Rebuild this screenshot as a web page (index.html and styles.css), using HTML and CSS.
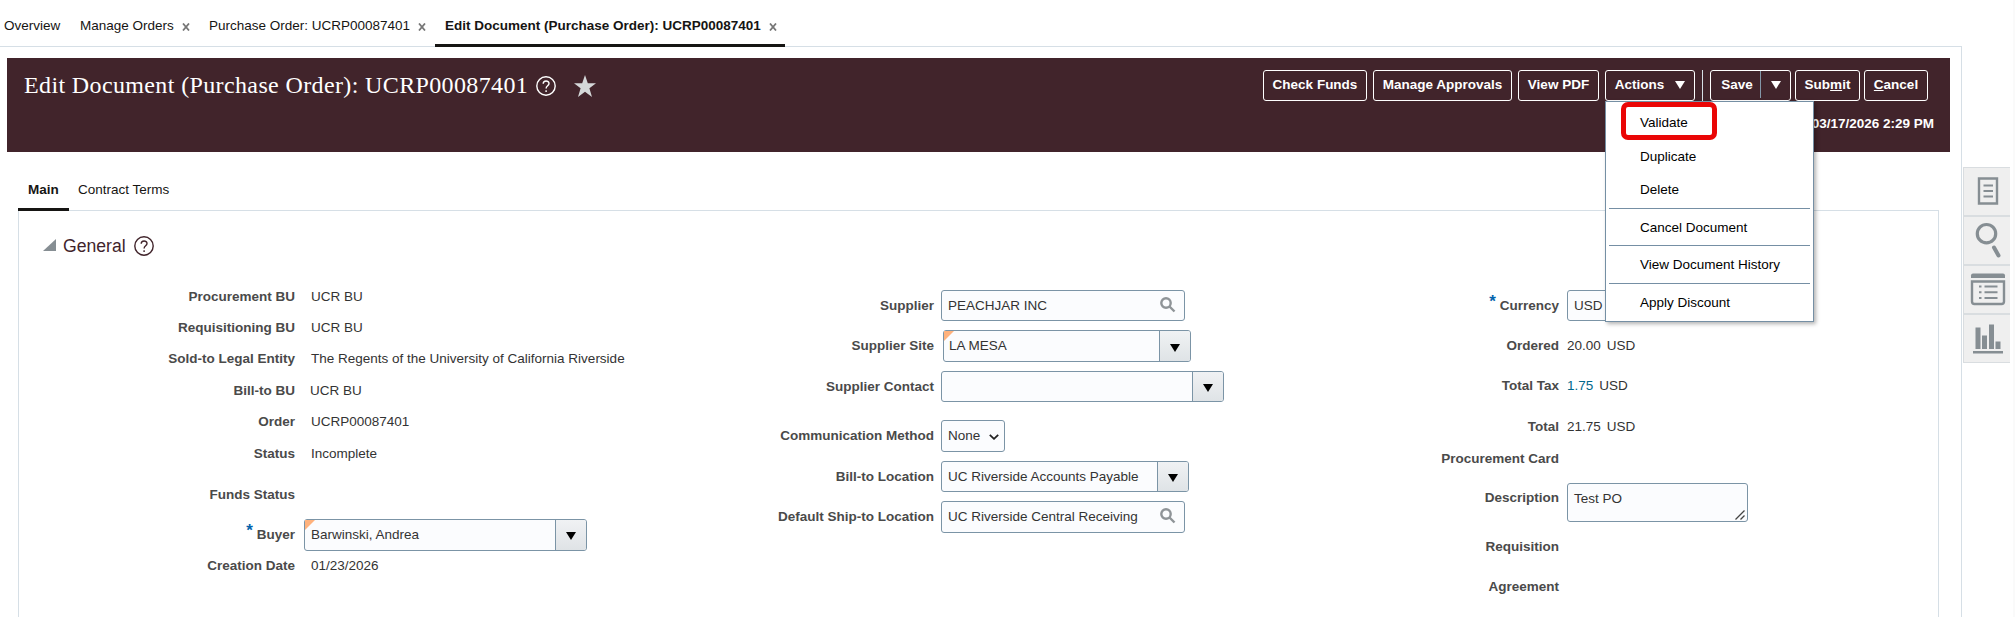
FILE: index.html
```html
<!DOCTYPE html>
<html lang="en">
<head>
  <meta charset="utf-8"/>
  <title>Edit Document (Purchase Order): UCRP00087401</title>
  <link rel="stylesheet" href="styles.css">
</head>
<body>
  <div class="page">
    <nav class="tabs">
      <a class="tab overview">Overview</a>
      <a class="tab orders">Manage Orders <svg class="close" viewBox="0 0 8 8"><path d="M1 .5l6 7M7 .5l-6 7"/></svg></a>
      <a class="tab order">Purchase Order: UCRP00087401 <svg class="close" viewBox="0 0 8 8"><path d="M1 .5l6 7M7 .5l-6 7"/></svg></a>
      <a class="tab active">Edit Document (Purchase Order): UCRP00087401 <svg class="close" viewBox="0 0 8 8"><path d="M1 .5l6 7M7 .5l-6 7"/></svg></a>
    </nav>

    <div class="content">
      <header class="header">
        <div class="title">
          <h1>Edit Document (Purchase Order): UCRP00087401</h1>
          <svg class="help" viewBox="0 0 20 20"><circle cx="10" cy="10" r="9.2"/><path d="M7.2 7.8c0-3.8 5.8-3.6 5.8-.3 0 2.2-2.9 2.3-2.9 4.9M10.1 14.2v1.7"/></svg>
          <svg class="star" viewBox="0 0 24 22"><path d="M12 0l2.8 8.2H23l-6.6 5.1L19 22l-7-5.2L5 22l2.6-8.7L1 8.2h8.2z"/></svg>
        </div>
        <div class="header-right">
          <div class="buttons">
            <button class="btn check">Check Funds</button>
            <button class="btn approvals">Manage Approvals</button>
            <button class="btn pdf">View PDF</button>
            <div class="actions">
              <button class="btn">Actions <i class="arrow"></i></button>
              <div class="menu">
                <a class="item">Validate<span class="marker"></span></a>
                <a class="item">Duplicate</a>
                <a class="item">Delete</a>
                <hr>
                <a class="item">Cancel Document</a>
                <hr>
                <a class="item">View Document History</a>
                <hr>
                <a class="item">Apply Discount</a>
              </div>
            </div>
            <span class="divider"></span>
            <button class="btn save"><span>Save</span><i class="arrow"></i></button>
            <button class="btn submit">Sub<u>m</u>it</button>
            <button class="btn cancel"><u>C</u>ancel</button>
          </div>
          <div class="saved">03/17/2026 2:29 PM</div>
        </div>
      </header>

      <nav class="subtabs">
        <a class="subtab active">Main</a>
        <a class="subtab">Contract Terms</a>
      </nav>

      <section class="panel">
        <div class="section-title">
          <svg class="collapse" viewBox="0 0 13 12"><path d="M13 0v12H0z"/></svg>
          <h2>General</h2>
          <svg class="help" viewBox="0 0 20 20"><circle cx="10" cy="10" r="9.2"/><path d="M7.2 7.8c0-3.8 5.8-3.6 5.8-.3 0 2.2-2.9 2.3-2.9 4.9M10.1 14.2v1.7"/></svg>
        </div>

        <div class="form">
          <div class="col first">
            <div class="row"><label>Procurement BU</label><span>UCR BU</span></div>
            <div class="row"><label>Requisitioning BU</label><span>UCR BU</span></div>
            <div class="row"><label>Sold-to Legal Entity</label><span>The Regents of the University of California Riverside</span></div>
            <div class="row bill"><label>Bill-to BU</label><span>UCR BU</span></div>
            <div class="row"><label>Order</label><span>UCRP00087401</span></div>
            <div class="row"><label>Status</label><span>Incomplete</span></div>
            <div class="row funds"><label>Funds Status</label></div>
            <div class="row buyer"><label><b class="req">*</b> Buyer</label>
              <div class="field combo changed"><span>Barwinski, Andrea</span><div class="drop"><i class="arrow"></i></div></div>
            </div>
            <div class="row"><label>Creation Date</label><span>01/23/2026</span></div>
          </div>

          <div class="col second">
            <div class="row"><label>Supplier</label>
              <div class="field lov"><span>PEACHJAR INC</span><svg class="search" viewBox="0 0 16 16"><circle cx="6" cy="6" r="4.7"/><path d="M9.5 9.5l5 5"/></svg></div>
            </div>
            <div class="row site"><label>Supplier Site</label>
              <div class="field combo changed"><span>LA MESA</span><div class="drop"><i class="arrow"></i></div></div>
            </div>
            <div class="row contact"><label>Supplier Contact</label>
              <div class="field combo"><span></span><div class="drop"><i class="arrow"></i></div></div>
            </div>
            <div class="row method"><label>Communication Method</label>
              <div class="field select"><span>None</span><svg class="chevron" viewBox="0 0 10 6"><path d="M.8.8L5 4.8 9.2.8"/></svg></div>
            </div>
            <div class="row location"><label>Bill-to Location</label>
              <div class="field combo"><span>UC Riverside Accounts Payable</span><div class="drop"><i class="arrow"></i></div></div>
            </div>
            <div class="row ship"><label>Default Ship-to Location</label>
              <div class="field lov"><span>UC Riverside Central Receiving</span><svg class="search" viewBox="0 0 16 16"><circle cx="6" cy="6" r="4.7"/><path d="M9.5 9.5l5 5"/></svg></div>
            </div>
          </div>

          <div class="col third">
            <div class="row currency"><label><b class="req">*</b> Currency</label><div class="field"><span>USD</span></div></div>
            <div class="row"><label>Ordered</label><span>20.00</span><span class="unit">USD</span></div>
            <div class="row tax"><label>Total Tax</label><a class="link">1.75</a><span class="unit">USD</span></div>
            <div class="row"><label>Total</label><span>21.75</span><span class="unit">USD</span></div>
            <div class="row card"><label>Procurement Card</label></div>
            <div class="row description"><label>Description</label>
              <div class="field textarea"><span>Test PO</span><svg class="grip" viewBox="0 0 10 10"><path d="M.5 9.5l9-9M5.5 9.5l4-4"/></svg></div>
            </div>
            <div class="row requisition"><label>Requisition</label></div>
            <div class="row agreement"><label>Agreement</label></div>
          </div>
        </div>
      </section>
    </div>
  </div>

  <aside class="dock">
    <div class="dock-item"><svg viewBox="0 0 48 47"><path class="line" d="M15 10.5h18v25H15z"/><path class="thin" d="M19.500 17.500h9.500M19.500 23h9.500M19.500 28.500h9.500"/></svg></div>
    <div class="dock-item"><svg viewBox="0 0 48 47"><circle class="ring" cx="22.500" cy="16.700" r="9.200"/><path class="handle" d="M30 30.500l4.500 8"/></svg></div>
    <div class="dock-item"><svg viewBox="0 0 48 47"><path class="fill" d="M7 12V9.500q0-2 2-2h30q2 0 2 2V12z"/><path class="line" d="M8 15.500h32v20q0 2.500-2.500 2.500h-27Q8 38 8 35.500z"/><path class="thin" d="M15 20.500h2.500M20.500 20.500h13M15 26.300h2.500M20.500 26.300h13M15 32h2.500M20.500 32h13"/></svg></div>
    <div class="dock-item"><svg viewBox="0 0 48 47"><path class="fill" d="M11.500 12.500h5V34h-5zM18 20.500h5V34h-5zM25 9.500h5V34h-5zM31.500 26.500h5V34h-5zM9 36h30v2.500H9z"/></svg></div>
  </aside>
</body>
</html>
```
FILE: styles.css
```css
* {
  box-sizing: border-box;
}
body {
  display: flex;
  margin: 0;
  height: 617px;
  overflow: hidden;
  background: #fff;
  color: #333;
  font-family: "Liberation Sans", Arial, sans-serif;
  font-size: 13.5px;
  line-height: 16px;
  white-space: nowrap;
}
h1, h2 {
  margin: 0;
  font-weight: normal;
}
svg {
  display: block;
  flex: none;
  fill: none;
}
.page {
  width: 1962px;
  flex: none;
}

/* top tabs */
.tabs {
  display: flex;
  height: 47px;
  border-bottom: 1px solid #d6dfe6;
}
.tab {
  display: flex;
  align-items: center;
  height: 47px;
  padding-top: 5px;
  color: #161513;
}
.tab.overview { width: 76px; padding-left: 4px; }
.tab.orders { width: 120px; padding-left: 4px; }
.tab.order { width: 239px; padding-left: 13px; }
.tab.active {
  width: 350px;
  padding-left: 10px;
  padding-top: 8px;
  border-bottom: 3px solid #161513;
  font-weight: bold;
}
.close {
  width: 8px;
  height: 8px;
  margin: 2px 0 0 8px;
  stroke: #777;
  stroke-width: 1.8;
}

.content {
  height: 570px;
  padding: 11px 11px 0 7px;
  border-right: 1px solid #d6dfe6;
}

/* page header */
.header {
  display: flex;
  justify-content: space-between;
  height: 94px;
  padding: 12px 16px 0 17px;
  background: #41242b;
  color: #fff;
}
.title {
  display: flex;
  height: 33px;
  align-items: center;
}
.title h1 {
  width: 512px;
  padding-bottom: 4px;
  font-family: Georgia, "Liberation Serif", serif;
  font-size: 24px;
  letter-spacing: 0.37px;
  line-height: 28px;
}
.help {
  width: 20px;
  height: 20px;
  stroke: currentColor;
  stroke-width: 1.4;
}
.title .help { margin-bottom: 1px; }
.star {
  width: 24px;
  height: 22px;
  margin: 0 0 1px 17px;
  fill: #d5d8d9;
}
.header-right {
  display: flex;
  flex-direction: column;
  align-items: flex-end;
}
.buttons {
  display: flex;
  margin-right: 6px;
}
.btn {
  display: flex;
  align-items: center;
  justify-content: center;
  height: 31px;
  margin: 0;
  padding: 0 0 2px;
  border: 1px solid #fff;
  border-radius: 3px;
  background: none;
  color: #fff;
  font: bold 13.5px/16px "Liberation Sans", Arial, sans-serif;
}
.btn.check { width: 104px; margin-right: 6px; }
.btn.approvals { width: 139px; margin-right: 6px; }
.btn.pdf { width: 81px; margin-right: 6px; }
.btn.submit { width: 65px; margin-right: 4px; }
.btn.cancel { width: 64px; }
.actions {
  position: relative;
}
.actions .btn { width: 90px; }
.arrow {
  width: 0;
  height: 0;
  border: 5px solid transparent;
  border-top: 8px solid currentColor;
  border-bottom: 0;
}
.actions .arrow { margin-left: 11px; }
.divider {
  width: 1px;
  height: 31px;
  margin: 0 7px 0 7px;
  background: #d6dfe6;
}
.btn.save {
  width: 81px;
  margin-right: 4px;
  padding: 0;
  justify-content: flex-start;
}
.save span {
  width: 50px;
  height: 27px;
  margin-bottom: 2px;
  padding: 6px 0 0 3px;
  border-right: 1px solid #8397a8;
}
.save .arrow { margin: 0 0 2px 10px; }
.saved {
  margin-top: 15px;
  font-weight: bold;
}

/* actions menu */
.menu {
  position: absolute;
  top: 31px;
  left: 0;
  z-index: 2;
  width: 209px;
  height: 221px;
  padding: 4px 3px;
  border: 1px solid #758fa4;
  background: #fff;
  color: #000;
  box-shadow: 2px 2px 4px rgba(0, 0, 0, 0.3);
}
.item {
  position: relative;
  display: block;
  height: 33.5px;
  padding: 9px 0 0 31px;
}
.menu hr {
  height: 1px;
  margin: 1px 0 2px;
  border: 0;
  background: #758fa4;
}
.marker {
  position: absolute;
  top: -4px;
  left: 12px;
  width: 96px;
  height: 38px;
  border: 5px solid #ea0606;
  border-radius: 7px;
}

/* main / contract terms */
.subtabs {
  display: flex;
  height: 59px;
  margin: 0 11px;
  border-bottom: 1px solid #d6dfe6;
}
.subtab {
  height: 59px;
  padding: 30px 10px 0 9px;
  color: #161513;
}
.subtab.active {
  width: 51px;
  padding-left: 10px;
  border-bottom: 3px solid #161513;
  font-weight: bold;
}
.panel {
  height: 406px;
  margin: 0 11px;
  padding-top: 25px;
  border: 1px solid #d6dfe6;
  border-width: 0 1px;
}
.section-title {
  display: flex;
  align-items: center;
  height: 20px;
  padding-left: 24px;
  color: #41242b;
}
.section-title h2 {
  width: 71px;
  margin-left: 7px;
  font-size: 17.6px;
  line-height: 20px;
}
.collapse {
  width: 13px;
  height: 12px;
  margin-top: -2px;
  fill: #868e93;
}

/* form columns */
.form {
  display: flex;
}
.col {
  flex: none;
}
.row {
  display: flex;
  align-items: center;
}
.row label {
  flex: none;
  color: #4a4a4a;
  font-weight: bold;
  text-align: right;
}
.req {
  position: relative;
  top: -3px;
  color: #0464ad;
  font-size: 17px;
  line-height: 10px;
}
.field {
  position: relative;
  display: flex;
  height: 31px;
  padding: 7px 0 0 6px;
  border: 1px solid #7b94a6;
  border-radius: 3px;
  background: #fbfcfe;
}
.field.changed::before {
  content: "";
  position: absolute;
  top: 0;
  left: 0;
  border-top: 10px solid #ffb27d;
  border-right: 10px solid transparent;
}
.field.changed span { position: relative; }
.combo, .lov {
  justify-content: space-between;
}
.drop {
  display: flex;
  align-items: center;
  justify-content: center;
  width: 31px;
  margin-top: -7px;
  border-left: 1px solid #7b94a6;
  border-radius: 0 2px 2px 0;
  background: linear-gradient(#f0f2f4, #dfe3e6);
  color: #000;
}
.drop .arrow { margin-top: 3px; }
.search {
  width: 16px;
  height: 16px;
  margin: -1px 8px 0 0;
  stroke: #8f9498;
  stroke-width: 2.4;
}

.first {
  width: 619px;
  padding-top: 25px;
}
.first .row { height: 31.4px; }
.first label { width: 276px; margin-right: 16px; }
.first .row.bill label { margin-right: 15px; }
.first .row.funds { height: 50px; padding-top: 1px; }
.first .row.buyer { height: 31px; }
.first .row.buyer label { margin-right: 9px; }
.buyer .field { width: 283px; height: 32px; }

.second {
  width: 627px;
  padding-top: 34px;
}
.second label { width: 296px; margin-right: 7px; }
.second .row { height: 31px; }
.second .lov { width: 244px; }
.second .row.site { margin-top: 9px; height: 32px; }
.second .site label { margin-right: 9px; }
.site .field { width: 248px; height: 32px; }
.site .field { padding-left: 5px; }
.second .row.contact { margin-top: 9px; }
.contact .field { width: 283px; }
.second .row.method { margin-top: 18px; height: 32px; }
.method .field { width: 64px; height: 32px; }
.second .row.location { margin-top: 9px; }
.location .field { width: 248px; }
.second .row.ship { margin-top: 9px; height: 32px; }
.ship .field { height: 32px; }
.chevron {
  width: 10px;
  height: 6px;
  margin: 6px 0 0 9px;
  stroke: #222;
  stroke-width: 1.8;
}

.third {
  padding-top: 34px;
}
.third label { width: 294px; margin-right: 8px; }
.third .row { height: 40px; padding-top: 1px; }
.third .row.currency { height: 31px; margin-bottom: 4px; padding-top: 0; }
.currency .field { width: 60px; }
.third .row.tax { height: 41px; }
.third .row.card { height: 24px; }
.third .row.description { height: 40px; margin-top: 12px; align-items: flex-start; }
.description label { margin-top: 7px; }
.description .field { width: 181px; height: 39px; justify-content: space-between; }
.third .row.requisition { margin-top: 4px; }
.third .row.agreement { height: 41px; }
.unit { margin-left: 6px; }
.link { color: #00688c; }
.grip {
  width: 10px;
  height: 10px;
  margin: 19px 2px 0 0;
  stroke: #444;
  stroke-width: 1.3;
}

/* right side dock */
.dock {
  width: 53px;
  flex: none;
  height: 617px;
  padding: 167px 3px 0 1px;
  border-right: 2px solid #fafafa;
}
.dock-item {
  height: 49px;
  border: 1px solid #d9dde0;
  border-right: 0;
  background: #efefef;
}
.dock-item svg {
  width: 48px;
  height: 47px;
}
.dock .line { stroke: #868e93; stroke-width: 2.4; }
.dock .thin { stroke: #868e93; stroke-width: 2; }
.dock .ring { stroke: #868e93; stroke-width: 3.2; }
.dock .handle { stroke: #868e93; stroke-width: 4; stroke-linecap: round; }
.dock .fill { fill: #868e93; }
```
